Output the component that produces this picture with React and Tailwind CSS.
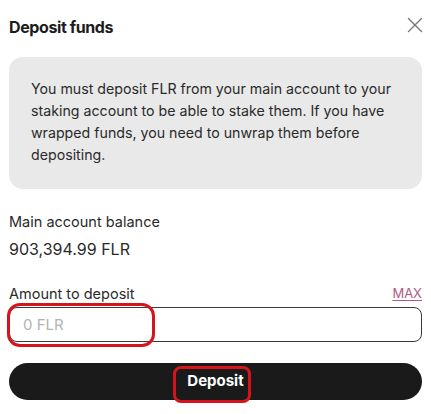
import { X } from 'lucide-react';

export default function App() {
  return (
    <div
      className="w-[431px] h-[414px] bg-white px-[9px] text-[#1c1c1c] overflow-hidden"
      style={{ fontFamily: 'Inter, "Noto Sans", sans-serif' }}
    >
      {/* Header */}
      <div className="flex items-center justify-between pt-[11px] h-[42px]">
        <h3 className="text-[16px] font-bold tracking-tight">Deposit funds</h3>
        <button type="button" className="text-[#7a7a7a] mr-[-6px] mt-[-4px]">
          <X className="h-[26px] w-[26px]" strokeWidth={1.3} />
        </button>
      </div>

      {/* Info box */}
      <div className="mt-[15px] h-[132px] rounded-[14px] bg-[#e9e9e9] pl-[22px] pr-[20px] pt-[21px]">
        <p className="text-[14.2px] leading-[22px] text-[#2a2a2a]">
          You must deposit FLR from your main account to your staking account to be able to stake them. If you have wrapped funds, you need to unwrap them before depositing.
        </p>
      </div>

      {/* Balance */}
      <div className="mt-[22px]">
        <p className="text-[14.5px] leading-[22px] text-[#2a2a2a]">Main account balance</p>
        <p className="mt-[5px] text-[16px] leading-[22px] text-[#2a2a2a]">903,394.99 FLR</p>
      </div>

      {/* Amount */}
      <div className="mt-[25px]">
        <div className="flex items-center justify-between h-[18px]">
          <span className="text-[14.5px] text-[#2a2a2a]">Amount to deposit</span>
          <a className="text-[13px] text-[#b4597e] underline underline-offset-2">MAX</a>
        </div>
        <div className="relative mt-[4px]">
          <input
            className="w-full h-[35px] rounded-[8px] border border-[#3a3a3a] px-[13px] text-[15px] placeholder:text-[#b3b3b3] outline-none"
            placeholder="0 FLR"
          />
          <div className="absolute left-[-2px] top-[-4px] w-[148px] h-[44px] rounded-[13px] border-[3px] border-[#d5141e] pointer-events-none" />
        </div>
      </div>

      {/* Button */}
      <button
        type="button"
        className="relative mt-[21px] w-full h-[37px] rounded-full bg-[#1a1a1a] text-white text-[15px] font-bold flex items-center justify-center"
      >
        <span>Deposit</span>
        <span className="absolute left-[164px] top-[3px] w-[78px] h-[37px] rounded-[8px] border-[3px] border-[#d5141e]" />
      </button>
    </div>
  );
}
